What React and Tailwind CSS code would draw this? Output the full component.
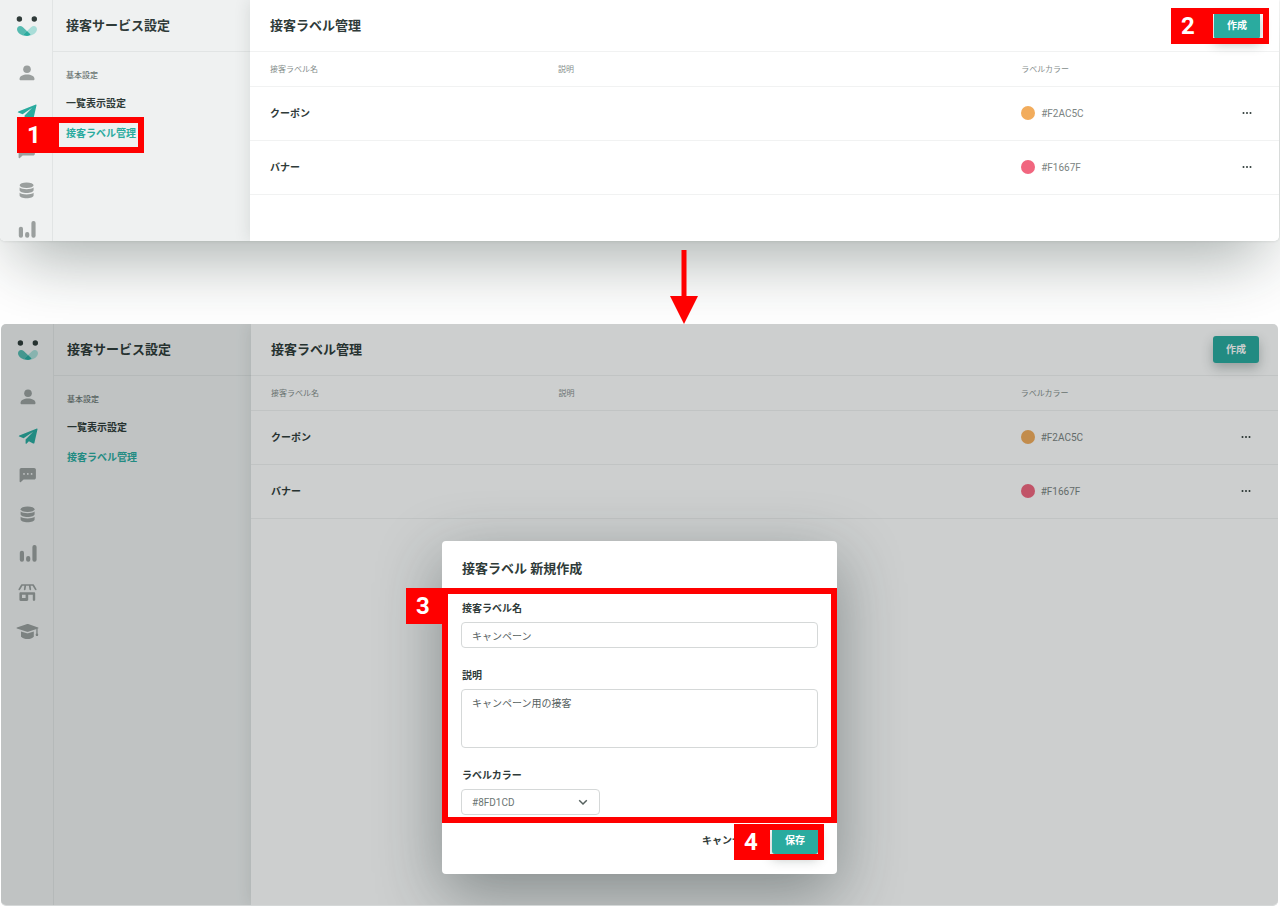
import { clsx } from 'clsx';

const labels = [
  { id: 1, name: 'クーポン', color: '#F2AC5C' },
  { id: 2, name: 'バナー', color: '#F1667F' },
];

const icons = {
  user: (
    <>
      <circle cx="12" cy="8.3" r="3.8" />
      <path d="M4.5 17.9c0-2.8 3.5-4.5 7.5-4.5s7.5 1.7 7.5 4.5c0 .9-.5 1.4-1.4 1.4H5.9c-.9 0-1.4-.5-1.4-1.4z" />
    </>
  ),
  send: (
    <path d="M20.9 4.5 3.3 11.4c-.6.3-.6 1 0 1.2l4.3 1.7 9.600-6.500-7.600 7.800v3.600c0 .6.7.8 1.100.4l2.200-2.300 4.200 2.200c.6.3 1.200 0 1.300-.6l3.100-13.700c.1-.5-.2-.8-.6-.7z" />
  ),
  chat: (
    <>
      <path d="M5.400 5h12.700c1 0 1.800.8 1.800 1.800v7.900c0 1-.8 1.800-1.800 1.800H7.600l-2.700 2.600c-.5.5-1.300.2-1.300-.5V6.800c0-1 .8-1.800 1.800-1.800z" />
      <g className="fill-[#eff1f1]">
        <circle cx="8" cy="10.9" r="0.9" />
        <circle cx="11.8" cy="10.9" r="0.9" />
        <circle cx="15.6" cy="10.9" r="0.9" />
      </g>
    </>
  ),
  database: (
    <>
      <ellipse cx="11.6" cy="7.3" rx="7" ry="2.8" />
      <path d="M4.600 9.600c1.300 1.200 4 1.700 7 1.700s5.700-.5 7-1.700v2.700c0 1.500-3.100 2.700-7 2.700s-7-1.200-7-2.700z" />
      <path d="M4.600 14.800c1.300 1.200 4 1.700 7 1.700s5.700-.5 7-1.700v2.700c0 1.500-3.100 2.700-7 2.700s-7-1.200-7-2.700z" />
    </>
  ),
  chart: (
    <>
      <rect x="3.8" y="9.7" width="4.2" height="11" rx="2" />
      <rect x="10.1" y="15" width="4.2" height="5.7" rx="2" />
      <rect x="16.4" y="4" width="4.2" height="16.7" rx="2" />
    </>
  ),
  store: (
    <>
      <path
        d="M3.300 9.400 5.900 5h11.200l2.600 4.400M9.300 5.300l-.6 4M13.700 5.300l.6 4"
        fill="none"
        stroke="currentColor"
        strokeWidth="1.7"
        strokeLinecap="round"
        strokeLinejoin="round"
      />
      <path
        fillRule="evenodd"
        d="M4.600 12.200h13.400c.7 0 1.200.5 1.200 1.200v6.400c0 .7-.5 1.200-1.200 1.200h-.1c-.6 0-1.100-.5-1.100-1.200v-5h-4.600v5c0 .7-.5 1.200-1.200 1.200H4.600c-.7 0-1.200-.5-1.200-1.200v-6.400c0-.7.5-1.200 1.200-1.200zM6 14.800v3.300h3.600v-3.300z"
      />
    </>
  ),
  school: (
    <>
      <path d="M11.200 5.100.9 8.400c-.5.200-.5.800 0 1l10 3.400c.4.100.9.100 1.300 0l9.900-3.400c.5-.2.5-.8 0-1L12.200 5.100c-.3-.1-.7-.1-1 0z" />
      <path d="M5 12.400v5.300c1.800 1.600 4 2.400 6.600 2.400s4.600-.8 6.200-2.400v-5.300l-5.700 1.900c-.4.100-.8.100-1.200 0z" />
      <path d="M20.300 9.600h1.300v4.900c.5.300.7.700.6 1.300l-.3 1.200h-1.900l-.3-1.200c-.1-.6.100-1 .6-1.300z" />
    </>
  ),
};

function Logo() {
  return (
    <svg viewBox="0 0 24 22" className="h-[22px] w-6" aria-label="ロゴ" role="img">
      <circle cx="4.4" cy="4" r="2.7" fill="#2f3b39" />
      <circle cx="19.3" cy="4" r="2.7" fill="#2f3b39" />
      <path d="M2 14.200C2 12.400 3.400 11 5.100 11c1 0 1.900.4 2.600 1.100l7.900 7.500c-1 .8-2.300 1.300-3.800 1.300C6.600 20.900 2 17.700 2 14.200z" fill="#55bab0" />
      <path d="M22 14.200c0-1.800-1.400-3.200-3.100-3.200-1 0-1.900.4-2.600 1.100l-7.900 7.500c1 .8 2.300 1.300 3.800 1.300 5.200 0 9.800-3.200 9.800-6.700z" fill="#a9ddd8" />
      <path d="M12 16.100l-3.600 3.500c1 .8 2.200 1.300 3.600 1.300s2.600-.5 3.600-1.300z" fill="#2aab9f" />
    </svg>
  );
}

function Rail() {
  return (
    <div className="w-[53px] shrink-0 border-r border-[#e1e4e4] pl-px">
      <div className="flex h-[52px] items-center justify-center">
        <Logo />
      </div>
      <nav className="pt-px">
        {Object.entries(icons).map(([name, icon]) => (
          <a
            key={name}
            href={`#${name}`}
            aria-label={name}
            className={clsx(
              'flex h-[39px] items-center justify-center',
              name === 'send' ? 'text-[#2aab9f]' : 'text-[#9a9f9e]'
            )}
          >
            <svg viewBox="0 0 24 24" fill="currentColor" className="size-6">
              {icon}
            </svg>
          </a>
        ))}
      </nav>
    </div>
  );
}

function Sidebar() {
  return (
    <div className="w-[197px] shrink-0">
      <h2 className="flex h-[52px] items-center border-b border-[#e1e4e4] pl-[13px] text-[13px] font-bold">
        接客サービス設定
      </h2>
      <div className="pt-4 pl-[13px]">
        <p className="mb-[5px] text-[8px] leading-4 font-medium text-[#6b7573]">基本設定</p>
        <a href="#list" className="block text-[10px] leading-[30px] font-bold">
          一覧表示設定
        </a>
        <a href="#labels" className="block text-[10px] leading-[30px] font-bold text-[#2aab9f]">
          接客ラベル管理
        </a>
      </div>
    </div>
  );
}

function PrimaryButton({ children }) {
  return (
    <button
      type="button"
      className="h-[27px] w-[46px] rounded-[3px] bg-[#2aab9f] text-[10px] font-bold text-white shadow-[0_5px_12px_rgba(30,50,45,0.3)]"
    >
      {children}
    </button>
  );
}

function LabelTable() {
  return (
    <table className="w-full table-fixed text-left">
      <colgroup>
        <col className="w-[28%]" />
        <col className="w-[45%]" />
        <col />
        <col className="w-16" />
      </colgroup>
      <thead>
        <tr className="h-[34px] border-b border-[#f1f2f2] text-[8px] text-[#858e8c]">
          <th className="pt-0.5 pl-5 font-normal">接客ラベル名</th>
          <th className="pt-0.5 pl-5 font-normal">説明</th>
          <th className="pt-0.5 pl-5 font-normal">ラベルカラー</th>
          <th />
        </tr>
      </thead>
      <tbody>
        {labels.map((label) => (
          <tr key={label.id} className="h-[54px] border-b border-[#f1f2f2] text-[10px]">
            <td className="pl-5 font-bold">{label.name}</td>
            <td />
            <td className="pl-5 text-[#7b8482]">
              <div className="flex items-center gap-1.5">
                <span className="size-3.5 rounded-full" style={{ backgroundColor: label.color }} />
                {label.color}
              </div>
            </td>
            <td>
              <button type="button" aria-label="メニュー" className="mx-auto flex size-6 items-center justify-center">
                <svg viewBox="0 0 10 2" className="h-0.5 w-2.5" fill="currentColor">
                  <circle cx="1.5" cy="1" r="1" />
                  <circle cx="5" cy="1" r="1" />
                  <circle cx="8.5" cy="1" r="1" />
                </svg>
              </button>
            </td>
          </tr>
        ))}
      </tbody>
    </table>
  );
}

function LabelPage() {
  return (
    <>
      <div className="flex shrink-0 bg-[#eff1f1]">
        <Rail />
        <Sidebar />
      </div>
      <main className="min-w-0 flex-1 bg-white shadow-[0_0_16px_rgba(30,50,45,0.12)]">
        <header className="flex h-[52px] items-center justify-between border-b border-[#f1f2f2] pr-[19px] pl-5">
          <h1 className="text-[13px] font-bold">接客ラベル管理</h1>
          <PrimaryButton>作成</PrimaryButton>
        </header>
        <LabelTable />
      </main>
    </>
  );
}

// Red frame with a step number on its left side
function Step({ number, className, numberClassName }) {
  return (
    <div className={clsx('pointer-events-none absolute flex h-9', className)}>
      <span className={clsx('flex items-center bg-[#ff0000] pl-2.5 text-2xl font-bold text-white', numberClassName)}>
        {number}
      </span>
      <span className="flex-1 border-6 border-[#ff0000]" />
    </div>
  );
}

function LabelModal() {
  return (
    <div
      role="dialog"
      aria-label="接客ラベル 新規作成"
      className="relative w-[395px] rounded bg-white px-[19px] pb-5 shadow-[0_20px_64px_rgba(30,45,45,0.42)]"
    >
      <h2 className="flex h-[54px] items-center pt-0.5 pl-px text-[13px] font-bold">接客ラベル 新規作成</h2>

      <form className="flex flex-col gap-3.5 text-[10px]">
        <div>
          <label htmlFor="name" className="block pt-0.5 pb-px pl-px leading-6 font-bold">
            接客ラベル名
          </label>
          <input
            id="name"
            defaultValue="キャンペーン"
            className="block h-[26px] w-full rounded border border-[#d5d8d8] px-2.5 text-[#56615f]"
          />
        </div>
        <div>
          <label htmlFor="description" className="block pt-0.5 pb-px pl-px leading-6 font-bold">
            説明
          </label>
          <textarea
            id="description"
            defaultValue="キャンペーン用の接客"
            className="block h-[59px] w-full resize-none rounded border border-[#d5d8d8] px-2.5 py-1.5 leading-4 text-[#56615f]"
          />
        </div>
        <div>
          <label htmlFor="color" className="block pt-0.5 pb-px pl-px leading-6 font-bold">
            ラベルカラー
          </label>
          <div className="relative w-[139px]">
            <select
              id="color"
              className="block h-[26px] w-full appearance-none rounded border border-[#d5d8d8] bg-white px-2.5 text-[#6b7573]"
            >
              <option>#8FD1CD</option>
            </select>
            <svg
              viewBox="0 0 10 10"
              className="pointer-events-none absolute top-2 right-3 size-2.5"
              fill="none"
              stroke="#56615f"
              strokeWidth="1.5"
            >
              <path d="M1.200 3.200 5 7l3.800-3.800" />
            </svg>
          </div>
        </div>
      </form>

      <div className="mt-3 flex items-center justify-end gap-5">
        <button type="button" className="text-[10px] font-bold">
          キャンセル
        </button>
        <PrimaryButton>保存</PrimaryButton>
      </div>

      <div className="pointer-events-none absolute inset-x-0 top-[47px] bottom-[51px] border-6 border-[#ff0000]" />
      <span className="absolute top-[47px] right-full flex size-9 items-center bg-[#ff0000] pl-2.5 text-2xl font-bold text-white">
        3
      </span>
      <Step number={4} className="right-[13px] bottom-3.5 w-[90px]" numberClassName="w-[30px]" />
    </div>
  );
}

export default function App() {
  return (
    <div className="flex min-h-screen flex-col overflow-hidden bg-white font-[Roboto,'Noto_Sans_CJK_JP',sans-serif] text-[#2f3b39]">
      <section className="relative mr-px">
        <div className="flex h-[241px] overflow-hidden rounded-b-[5px] shadow-[0_32px_64px_-16px_rgba(20,40,35,0.38),0_0_3px_rgba(20,40,35,0.15)]">
          <LabelPage />
        </div>
        <Step number={1} className="top-[117px] left-[17px] w-[127px]" numberClassName="w-9" />
        <Step number={2} className="top-2 right-2.5 w-[98px]" numberClassName="w-9" />
      </section>

      <div className="relative flex justify-center pt-[9px] pl-[88px]">
        <svg viewBox="0 0 28 74" className="h-[74px] w-7" fill="#ff0000">
          <path d="M11.500 0h5v46H28L14 74 0 46h11.500z" />
        </svg>
      </div>

      <section className="relative mr-0.5 ml-px flex flex-1 overflow-hidden rounded-[5px] border-b border-[#d5d8d8]">
        <LabelPage />
        <div className="absolute inset-0 flex items-start justify-center bg-[rgba(5,15,15,0.2)] pt-[217px]">
          <LabelModal />
        </div>
      </section>
    </div>
  );
}
